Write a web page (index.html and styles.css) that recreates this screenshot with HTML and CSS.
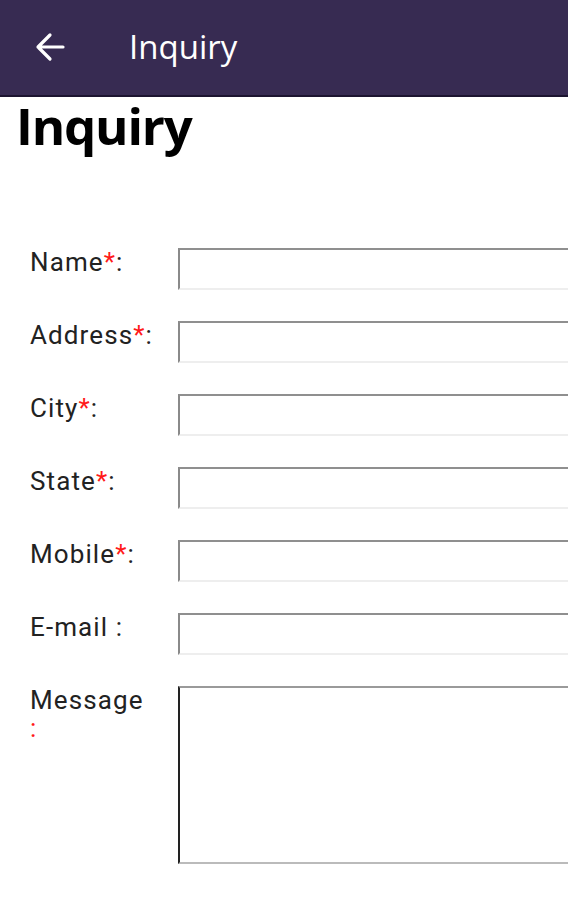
FILE: index.html
```html
<!DOCTYPE html>
<html>
<head>
<meta charset="utf-8">
<link rel="stylesheet" href="styles.css">
</head>
<body>
<header class="bar">
  <span class="back"><svg width="30" height="30" viewBox="0 0 30 30"><path d="M28 15H3M15 3L3 15l12 12" fill="none" stroke="#fff" stroke-width="3.2" stroke-linecap="round" stroke-linejoin="round"/></svg></span>
  <span class="bar-title">Inquiry</span>
</header>
<h1 class="page-title">Inquiry</h1>
<form class="form">
  <label class="lbl">Name<span class="req">*</span>:</label><input class="field" type="text">
  <label class="lbl">Address<span class="req">*</span>:</label><input class="field" type="text">
  <label class="lbl">City<span class="req">*</span>:</label><input class="field" type="text">
  <label class="lbl">State<span class="req">*</span>:</label><input class="field" type="text">
  <label class="lbl">Mobile<span class="req">*</span>:</label><input class="field" type="text">
  <label class="lbl">E-mail :</label><input class="field" type="text">
  <label class="lbl">Message<br><span class="req">:</span></label><textarea class="area"></textarea>
</form>
</body>
</html>
```
FILE: styles.css
```css
html, body { margin: 0; padding: 0; }
body { background: #fff; overflow: hidden; width: 568px; height: 900px; font-family: Roboto, "Noto Sans", sans-serif; }
.bar { box-sizing: border-box; height: 97px; padding-bottom: 2px; background: #372b52; border-bottom: 2px solid #1c1430; display: flex; align-items: center; }
.back { display: flex; margin-left: 35px; width: 30px; height: 30px; }
.bar-title { margin-left: 64px; color: #fff; font-family: "Open Sans", sans-serif; font-size: 33px; line-height: 1; }
.page-title { margin: 0; padding-left: 16px; font-family: "Open Sans", sans-serif; font-weight: 700; font-size: 51px; letter-spacing: -1.2px; line-height: 56px; color: #000; }
.form { display: grid; grid-template-columns: 148px 390px; row-gap: 31px; padding: 95px 0 0 30px; }
.lbl { font-size: 26px; letter-spacing: 1.1px; color: #222; line-height: 28px; }
.req { color: #ff1a1a; }
.field { box-sizing: border-box; width: 390px; height: 42px; margin: 0; padding: 0; border: none; border-top: 2px solid #8f8f8f; border-left: 2px solid #8a8a8a; border-bottom: 2px solid #eeeeee; background: #fff; outline: none; }
.area { box-sizing: border-box; width: 390px; height: 178px; margin: 0; padding: 0; border: none; border-top: 2px solid #9a9a9a; border-left: 2px solid #222; border-bottom: 2px solid #bbbbbb; resize: none; background: #fff; }
```
